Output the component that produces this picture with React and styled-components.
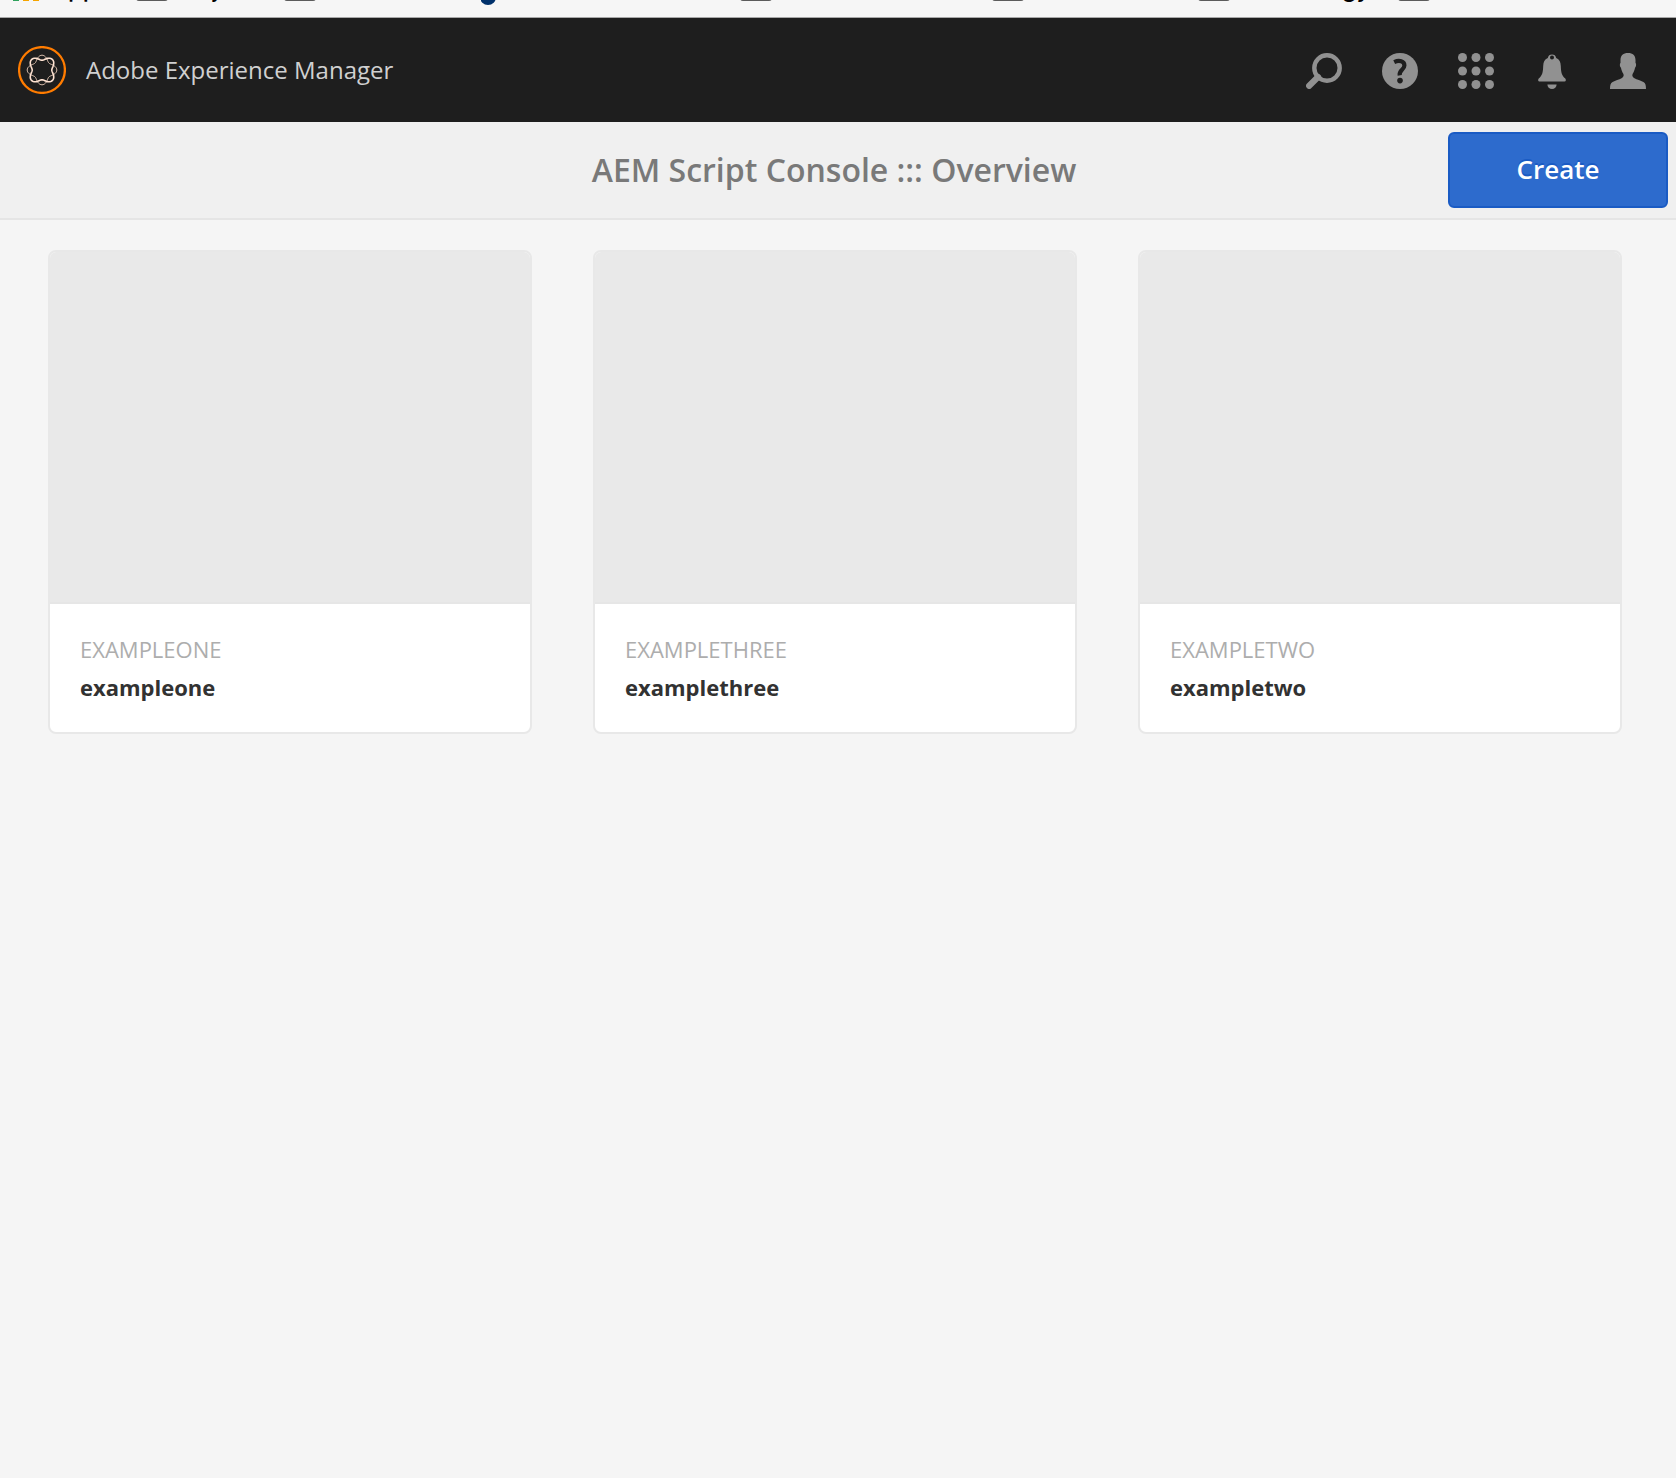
import React from "react";
import styled, { createGlobalStyle } from "styled-components";

const GlobalStyle = createGlobalStyle`
  * { box-sizing: border-box; }
  body {
    margin: 0;
    background: #f5f5f5;
    font-family: "Open Sans", "Noto Sans", sans-serif;
  }
`;

const BookmarksBar = styled.nav`
  display: flex;
  align-items: flex-end;
  height: 18px;
  padding-left: 13px;
  overflow: hidden;
  background: #f6f6f6;
  border-bottom: 1px solid #a8a8a8;
`;

const Bookmark = styled.a`
  display: flex;
  flex: none;
  align-items: flex-end;
  gap: 6px;
  width: ${(p) => p.$width}px;
  height: 32px;
  color: #000;
  font: 500 24px/32px Inter, sans-serif;
  text-decoration: none;
  svg { flex: none; }
`;

const BookmarkLabel = styled.span`
  padding-bottom: 12px;
`;

const AppsGlyph = styled.svg`
  margin-right: 4px;
`;

const TopBar = styled.header`
  display: flex;
  align-items: center;
  justify-content: space-between;
  height: 104px;
  padding: 0 30px 0 18px;
  background: #1e1e1e;
`;

const Brand = styled.a`
  display: flex;
  align-items: center;
  gap: 20px;
  color: #d0d0d0;
  font-size: 24px;
  font-weight: 500;
  line-height: 36px;
  text-decoration: none;
`;

const Tools = styled.div`
  display: flex;
  gap: 40px;
  padding-top: 2px;
`;

const ToolButton = styled.button`
  display: block;
  width: 36px;
  height: 36px;
  padding: 0;
  border: 0;
  background: none;
  color: #919191;
  svg { display: block; }
`;

const ActionBar = styled.div`
  display: grid;
  grid-template-columns: 1fr auto 1fr;
  align-items: center;
  padding: 10px 8px 10px 0;
  background: #f0f0f0;
  border-bottom: 2px solid #e5e5e5;
`;

const Title = styled.h1`
  grid-column: 2;
  margin: 0;
  color: #797979;
  font-size: 32px;
  font-weight: 600;
  line-height: 44px;
`;

const CreateButton = styled.button`
  justify-self: end;
  width: 220px;
  height: 76px;
  padding: 0 0 2px;
  border: 2px solid #1a5bc4;
  border-radius: 6px;
  background: #2d6bcd;
  color: #fff;
  font: 600 26px/36px "Open Sans", "Noto Sans", sans-serif;
  text-shadow: 0 -2px 0 #1a5bc4;
`;

const CardGrid = styled.main`
  display: grid;
  grid-template-columns: repeat(3, 1fr);
  gap: 61px;
  padding: 30px 54px 30px 48px;
`;

const Card = styled.article`
  overflow: hidden;
  border: 2px solid #e8e8e8;
  border-radius: 8px;
  background: #fff;
`;

const Thumbnail = styled.div`
  height: 352px;
  background: #e9e9e9;
  border-bottom: 2px solid #e6e6e6;
`;

const CardBody = styled.div`
  padding: 27px 30px 25px;
`;

const CardLabel = styled.h4`
  margin: 0;
  color: #adadad;
  font-size: 22px;
  font-weight: 400;
  line-height: 36px;
  text-transform: uppercase;
`;

const CardName = styled.h3`
  margin: 0;
  color: #323232;
  font-size: 22px;
  font-weight: 700;
  line-height: 40px;
`;

const bookmarks = [
  { kind: "apps", label: "Apps", width: 123 },
  { kind: "folder", label: "Projects", width: 148 },
  { kind: "folder", width: 197 },
  { kind: "site", width: 259 },
  { kind: "folder", width: 252 },
  { kind: "folder", width: 206 },
  { kind: "folder", label: "Technology", width: 200 },
  { kind: "folder", width: 200 },
];

const cards = ["exampleone", "examplethree", "exampletwo"];

function BookmarkIcon({ kind }) {
  if (kind === "apps") {
    return (
      <AppsGlyph width="28" height="32">
        <path d="M0 10h6v6H0z" fill="#2fa15c" />
        <path d="M10 10h6v6h-6zM20 10h6v6h-6z" fill="#f5a500" />
      </AppsGlyph>
    );
  }
  if (kind === "site") {
    return (
      <svg width="16" height="32">
        <circle cx="7" cy="12" r="8" fill="#00316b" />
      </svg>
    );
  }
  return (
    <svg width="32" height="32">
      <rect x="1" y="-6" width="30" height="21" rx="2" fill="none" stroke="#5c5c5c" strokeWidth="2" />
    </svg>
  );
}

function wave(sign) {
  const points = [];
  for (let i = 0; i < 96; i++) {
    const a = (i / 96) * Math.PI * 2;
    const r = 12.3 + sign * 2.5 * Math.cos(4 * a);
    points.push(`${(24 + r * Math.cos(a)).toFixed(2)},${(24 + r * Math.sin(a)).toFixed(2)}`);
  }
  return points.join(" ");
}

const Logo = () => (
  <svg width="48" height="48" viewBox="0 0 48 48" fill="none" aria-hidden="true">
    <circle cx="24" cy="24" r="22.9" stroke="#ff7c00" strokeWidth="2.3" />
    <polygon points={wave(1)} stroke="#dcc0ae" strokeWidth="1" />
    <polygon points={wave(-1)} stroke="#ffe3d2" strokeWidth="1.6" />
  </svg>
);

const SearchIcon = () => (
  <svg width="36" height="36" fill="none" stroke="currentColor">
    <circle cx="21" cy="15" r="12.7" strokeWidth="4.4" />
    <path d="M12 24 3.2 32.8" strokeWidth="6.2" strokeLinecap="round" />
  </svg>
);

const HelpIcon = () => (
  <svg width="36" height="36">
    <circle cx="18" cy="18" r="18" fill="currentColor" />
    <path
      d="M12.2 9.1c5-2.4 10.2-1 10.2 3.3 0 4.4-5.7 4.6-4.7 10"
      fill="none"
      stroke="#1e1e1e"
      strokeWidth="4.2"
    />
    <circle cx="18" cy="27.6" r="2.8" fill="#1e1e1e" />
  </svg>
);

const GridIcon = () => (
  <svg width="36" height="36" fill="currentColor">
    {[4.5, 18, 31.5].map((y) => [4.5, 18, 31.5].map((x) => <circle key={`${x}-${y}`} cx={x} cy={y} r="4.5" />))}
  </svg>
);

const BellIcon = () => (
  <svg width="36" height="36" fill="currentColor">
    <path
      fillRule="evenodd"
      d="M13.8 5A4.3 4.3 0 0 1 22.2 5C25.5 6.4 26.6 9 26.8 13c.3 7 1 9.500 4.500 12.600 1 1 .6 3-.7 3H5.400c-1.300 0-1.700-2-.7-3 3.500-3.100 4.200-5.600 4.500-12.600C9.400 9 10.500 6.400 13.800 5ZM18 2.400a2 2 0 1 0 0 4 2 2 0 0 0 0-4Z"
    />
    <path d="M13.400 31.400h9.200a4.600 4.600 0 0 1-9.200 0Z" />
  </svg>
);

const UserIcon = () => (
  <svg width="36" height="36" fill="currentColor">
    <path d="M18 0c4.800 0 7.500 2.500 7.500 7v3c.9.4.8 3.800-.4 4.600-.6 2.900-1.300 4.400-2.400 6.200-.8 1.500-.3 3.200 1.300 4.100 3.200 1.700 6.600 2.500 9.400 4.200 2.100 1.300 2.600 3.300 2.600 6.900H0c0-3.600.5-5.600 2.600-6.900 2.800-1.700 6.200-2.500 9.400-4.200 1.600-.9 2.100-2.600 1.300-4.100-1.100-1.800-1.800-3.300-2.400-6.200-1.200-.8-1.300-4.200-.4-4.600V7c0-4.500 2.700-7 7.500-7Z" />
  </svg>
);

const tools = [
  { name: "Search", Icon: SearchIcon },
  { name: "Help", Icon: HelpIcon },
  { name: "Solutions", Icon: GridIcon },
  { name: "Notifications", Icon: BellIcon },
  { name: "User", Icon: UserIcon },
];

export default function App() {
  return (
    <>
      <GlobalStyle />
      <BookmarksBar aria-label="Bookmarks">
        {bookmarks.map((b, i) => (
          <Bookmark key={i} href="#" $width={b.width} aria-label={b.label || "Bookmark"}>
            <BookmarkIcon kind={b.kind} />
            {b.label && <BookmarkLabel>{b.label}</BookmarkLabel>}
          </Bookmark>
        ))}
      </BookmarksBar>
      <TopBar>
        <Brand href="#">
          <Logo />
          Adobe Experience Manager
        </Brand>
        <Tools>
          {tools.map(({ name, Icon }) => (
            <ToolButton key={name} type="button" aria-label={name}>
              <Icon />
            </ToolButton>
          ))}
        </Tools>
      </TopBar>
      <ActionBar>
        <Title>AEM Script Console ::: Overview</Title>
        <CreateButton type="button">Create</CreateButton>
      </ActionBar>
      <CardGrid>
        {cards.map((name) => (
          <Card key={name}>
            <Thumbnail />
            <CardBody>
              <CardLabel>{name}</CardLabel>
              <CardName>{name}</CardName>
            </CardBody>
          </Card>
        ))}
      </CardGrid>
    </>
  );
}
